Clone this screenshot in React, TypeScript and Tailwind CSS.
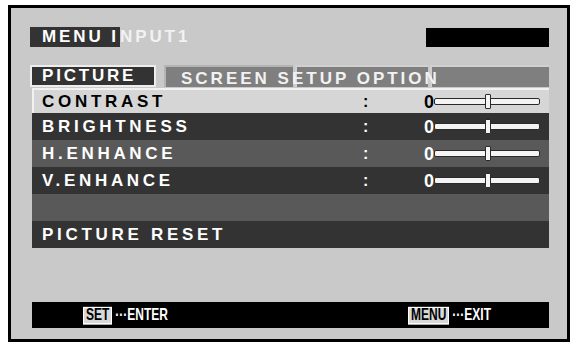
import React from "react";

const font = { fontFamily: '"Liberation Sans", Arial, sans-serif' };

type Row = { label?: string; tone: "sel" | "dark" | "mid"; value?: boolean; h: string };

const rows: Row[] = [
  { label: "CONTRAST", tone: "sel", value: true, h: "h-[25px]" },
  { label: "BRIGHTNESS", tone: "dark", value: true, h: "h-[27px]" },
  { label: "H.ENHANCE", tone: "mid", value: true, h: "h-[27px]" },
  { label: "V.ENHANCE", tone: "dark", value: true, h: "h-[27px]" },
  { tone: "mid", h: "h-[27px]" },
  { label: "PICTURE RESET", tone: "dark", h: "h-[27px]" },
];

function Slider() {
  return (
    <div className="relative flex h-[15px] w-[106px] items-center">
      <div className="h-[7px] w-full rounded-[2px] border border-[#2a2a2a] bg-[#f4f4f4]" />
      <div className="absolute left-[51px] top-0 h-[15px] w-[6px] rounded-[1px] border border-[#2a2a2a] bg-[#f4f4f4]" />
    </div>
  );
}

function MenuRow({ row }: { row: Row }) {
  const bg =
    row.tone === "sel"
      ? "bg-[#d6d6d6] border-t-2 border-l-2 border-[#f2f2f2] text-black pl-[8px]"
      : row.tone === "dark"
        ? "bg-[#333333] text-white pl-[10px]"
        : "bg-[#595959] text-white pl-[10px]";
  return (
    <div className={`flex items-center ${row.h} ${bg}`}>
      <span className="w-[321px] text-[17px] font-bold tracking-[3.7px]">{row.label}</span>
      {row.value && (
        <>
          <span className="w-[61px] text-[16px] font-bold">:</span>
          <span className="text-[18px] font-bold leading-none">0</span>
          <Slider />
        </>
      )}
    </div>
  );
}

export default function App() {
  return (
    <div className="h-[345px] w-[573px] bg-white pl-[8px] pt-[5px]" style={font}>
      <div className="flex h-[337px] w-[562px] flex-col border-[3px] border-black bg-[#c9c9c9] pb-[11px] pl-[19px] pr-[18px] pt-[19px]">
        {/* header */}
        <div className="flex h-[20px] items-center">
          <div className="flex h-[20px] w-[90px] items-center bg-[#333333] pl-[12px] text-[17px] font-bold tracking-[2.9px] text-white">
            MENU I
          </div>
          <span className="text-[17px] font-bold tracking-[2.9px] text-[#f2f2f2]">NPUT1</span>
          <div className="ml-auto h-[19px] w-[123px] bg-black" />
        </div>

        {/* tabs */}
        <div className="mt-[18px] flex h-[22px] gap-[2px]">
          <div className="flex w-[126px] items-center border-2 border-[#ededed] bg-[#333333] pl-[10px] text-[17px] font-bold tracking-[2.8px] text-white">
            PICTURE
          </div>
          <div className="relative ml-[6px] flex flex-1 gap-[2px]">
            <div className="w-[129px] border-l-2 border-t-2 border-[#b4b4b4] bg-[#7f7f7f]" />
            <div className="w-[133px] border-l-2 border-t-2 border-[#d0d0d0] bg-[#7f7f7f]" />
            <div className="flex-1 border-l-2 border-t-2 border-[#d0d0d0] bg-[#7f7f7f]" />
            <span className="absolute left-[17px] top-[1px] text-[17px] font-bold tracking-[3px] text-[#f2f2f2]">
              SCREEN SETUP OPTION
            </span>
          </div>
        </div>

        {/* rows */}
        <div className="mt-[1px] flex flex-col pl-[2px]">
          {rows.map((r, i) => (
            <MenuRow key={i} row={r} />
          ))}
        </div>

        {/* footer */}
        <div className="mt-auto ml-[2px] flex h-[26px] items-center bg-black text-[12px] font-bold text-white">
          <div className="flex w-full scale-y-[1.35] items-center">
            <span className="ml-[51px] border border-white bg-[#d8d8d8] px-[2px] leading-[11px] text-black">SET</span>
            <span className="ml-[3px]">···ENTER</span>
            <span className="ml-auto border border-white bg-[#d8d8d8] px-[2px] leading-[11px] text-black">MENU</span>
            <span className="ml-[3px] mr-[58px]">···EXIT</span>
          </div>
        </div>
      </div>
    </div>
  );
}
